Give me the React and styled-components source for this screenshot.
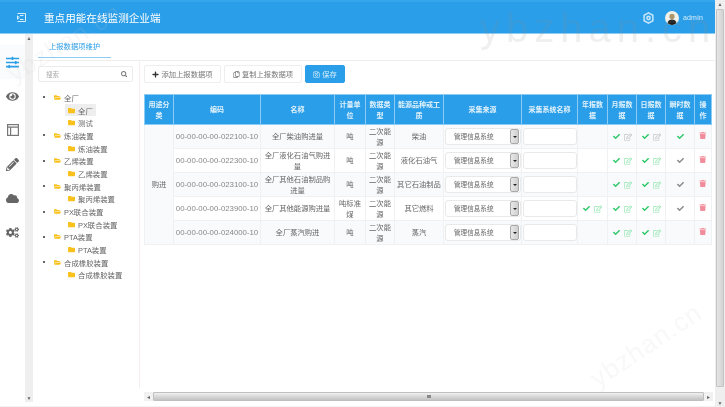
import React from 'react';
import styled, { createGlobalStyle } from 'styled-components';
import {
  FaSlidersH, FaEye, FaPencilAlt, FaCloud, FaCogs, FaCheck, FaRegEdit, FaTrash,
  FaSearch, FaPlus, FaFolder, FaFolderOpen, FaRegSave, FaRegCopy,
} from 'react-icons/fa';

const GlobalStyle = createGlobalStyle`
  html, body { margin: 0; padding: 0; background: #fff; }
  * { box-sizing: border-box; }
  body { font-family: "Liberation Sans", "Noto Sans CJK SC", sans-serif; color: #666; }
`;

const Shell = styled.div`
  position: relative;
  width: 725px;
  height: 407px;
  display: flex;
  overflow: hidden;
  background: #fff;
  filter: blur(0.35px);
`;

const Page = styled.div`
  flex: 1;
  min-width: 0;
  display: flex;
  flex-direction: column;
`;

const Header = styled.header`
  height: 34px;
  flex: none;
  display: flex;
  align-items: center;
  background: #2a9ee8;
  border-top: 2px solid #35a5ec;
  border-bottom: 1px solid #8ccbf3;
  padding: 0 12px 0 17px;
  color: #fff;
`;

const Title = styled.h1`
  margin: 0 0 0 18px;
  font-size: 10.6px;
  font-weight: 400;
  flex: 1;
`;

const Avatar = styled.svg`
  width: 14px;
  height: 14px;
  margin-left: 11px;
`;

const UserName = styled.span`
  margin-left: 4px;
  font-size: 7px;
  color: #d5edfb;
  letter-spacing: 0.2px;
`;

const Body = styled.div`
  flex: 1;
  min-height: 0;
  display: flex;
  padding-bottom: 4px;
  border-bottom: 1px solid #f2f2f2;
`;

const Rail = styled.nav`
  width: 25px;
  flex: none;
  display: flex;
  flex-direction: column;
  align-items: center;
`;

const RailItem = styled.div`
  width: 100%;
  height: 34px;
  display: flex;
  align-items: center;
  justify-content: center;
  font-size: 13px;
  color: ${(p) => (p.$active ? '#2a9ee8' : '#666')};
  background: ${(p) => (p.$active ? '#f9fbfd' : 'transparent')};
`;

const FirstRailGap = styled.div`
  height: 11px;
`;

const VScroll = styled.div`
  width: ${(p) => p.$width}px;
  flex: none;
  display: flex;
  flex-direction: column;
  align-items: stretch;
  background: #efefef;
  font-size: 5px;
  color: #777;
  text-align: center;
`;

const Arrow = styled.div`
  flex: none;
  height: 8px;
  line-height: 8px;
  font-size: 5px;
  color: #666;
  text-align: center;
`;

const VThumb = styled.div`
  flex: 1;
  margin: 1px 1px 12px;
  background: linear-gradient(90deg, #e6e6e6, #d2d2d2);
  border: 1px solid #c4c4c4;
  border-radius: 1px;
`;

const VSpacer = styled.div`
  flex: 1;
`;

const Main = styled.main`
  flex: 1;
  min-width: 0;
  display: flex;
  flex-direction: column;
`;

const TabBar = styled.div`
  height: 27px;
  flex: none;
  padding: 0 0 0 5px;
  border-bottom: 1px solid #eeeeee;
  display: flex;
  align-items: flex-end;
`;

const Tab = styled.div`
  width: 73px;
  height: 21px;
  padding-left: 11px;
  line-height: 20px;
  font-size: 7.3px;
  color: #2a9ee8;
  border-bottom: 1px solid #8ccbf3;
  margin-bottom: 2px;
`;

const Content = styled.div`
  flex: 1;
  min-height: 0;
  display: flex;
`;

const TreePanel = styled.aside`
  width: 107px;
  flex: none;
  padding: 5px 6px 0 5px;
  border-right: 1px solid #f5eeee;
  margin-bottom: 14px;
`;

const SearchBox = styled.div`
  height: 16px;
  display: flex;
  align-items: center;
  justify-content: space-between;
  padding: 0 5px 0 7px;
  border: 1px solid #ececec;
  border-radius: 2px;
  font-size: 6.5px;
  color: #aaa;
  & svg { font-size: 6.5px; color: #777; }
`;

const TreeList = styled.ul`
  list-style: none;
  margin: 9px 0 0;
  padding: 0;
`;

const TreeRow = styled.li`
  height: 12.7px;
  display: flex;
  align-items: center;
  font-size: 7.4px;
  color: #666;
  padding-left: ${(p) => (p.$child ? '27px' : '5px')};
`;

const Bullet = styled.span`
  width: 2px;
  height: 2px;
  margin-right: 6px;
  background: #333;
  border-radius: 50%;
`;

const NodeLabel = styled.span`
  display: flex;
  align-items: center;
  gap: 3px;
  height: 12px;
  padding: 0 3px;
  background: ${(p) => (p.$selected ? '#eeeeee' : 'transparent')};
  & svg { font-size: 7px; color: #f8c11c; }
`;

const RightPane = styled.section`
  flex: 1;
  min-width: 0;
  display: flex;
  flex-direction: column;
  padding: 4px 0 0 4px;
`;

const Toolbar = styled.div`
  height: 18px;
  flex: none;
  display: flex;
  gap: 3px;
  margin-bottom: 11px;
`;

const ToolButton = styled.button`
  height: 18px;
  width: ${(p) => p.$width}px;
  padding: 0;
  display: flex;
  align-items: center;
  justify-content: center;
  gap: 2px;
  font-family: inherit;
  font-size: 7.3px;
  border-radius: 2px;
  border: 1px solid ${(p) => (p.$primary ? '#2a9ee8' : '#eeeeee')};
  background: ${(p) => (p.$primary ? '#2a9ee8' : '#fff')};
  color: ${(p) => (p.$primary ? '#d8effc' : '#777')};
  & svg { font-size: 7px; }
`;

const TableWrap = styled.div`
  flex: 1;
  min-height: 0;
`;

const Table = styled.table`
  width: 567px;
  table-layout: fixed;
  border-collapse: collapse;
  font-size: 7.3px;
  text-align: center;
  line-height: 11px;
`;

const Th = styled.th`
  height: 30px;
  padding: 0 2px;
  font-weight: 700;
  font-size: 7px;
  color: #e3f3fd;
  background: #2a9ee8;
  border: 1px solid #8ccbf3;
`;

const Td = styled.td`
  height: 24px;
  padding: 0 ${(p) => (p.$code ? '1px' : '2px')};
  border: 1px solid #eef2f5;
  color: ${(p) => (p.$dim ? '#888' : '#666')};
  font-size: ${(p) => (p.$code ? '7.8px' : '7.3px')};
  white-space: ${(p) => (p.$code ? 'nowrap' : 'normal')};
  overflow: hidden;
  background: ${(p) => (p.$shaded ? '#f8fafb' : 'transparent')};
`;

const ControlTd = styled(Td)`
  padding: 0 1px;
`;

const Tr = styled.tr`
  background: ${(p) => (p.$odd ? '#f8fafb' : '#fff')};
`;

const SelectBox = styled.div`
  width: 76px;
  height: 17px;
  margin: 0 auto;
  display: flex;
  align-items: center;
  justify-content: space-between;
  padding: 0 1px 0 8px;
  background: #fff;
  border: 1px solid #e9e9e9;
  border-radius: 3px;
  font-size: 6.6px;
  color: #666;
`;

const SelectArrow = styled.span`
  width: 9px;
  height: 15px;
  display: flex;
  align-items: center;
  justify-content: center;
  background: linear-gradient(90deg, #e8e8e8, #cfcfcf);
  border: 1px solid #aaa;
  border-radius: 2px;
  &::after {
    content: '';
    border-left: 2px solid transparent;
    border-right: 2px solid transparent;
    border-top: 2.5px solid #222;
  }
`;

const TextInput = styled.input`
  display: block;
  width: 54px;
  height: 17px;
  margin: 0 auto;
  border: 1px solid #e9e9e9;
  border-radius: 3px;
  background: #fff;
`;

const Flags = styled.span`
  display: flex;
  align-items: center;
  justify-content: center;
  gap: 4px;
  font-size: 7px;
`;

const Check = styled(FaCheck)`
  color: ${(p) => (p.$off ? '#888' : '#2bc866')};
`;

const Edit = styled(FaRegEdit)`
  color: ${(p) => (p.$off ? '#c4c4c4' : '#95e6b4')};
  font-size: 8px;
`;

const Trash = styled(FaTrash)`
  color: #f28d9b;
  font-size: 7.5px;
`;

const HScroll = styled.div`
  height: 9px;
  flex: none;
  margin: 0 2px 1px 0;
  display: flex;
  align-items: center;
  background: #f1f1f1;
`;

const HArrow = styled.div`
  width: 9px;
  flex: none;
  font-size: 5px;
  color: #666;
  text-align: center;
`;

const HThumb = styled.div`
  flex: 1;
  height: 9px;
  display: flex;
  align-items: center;
  justify-content: center;
  background: linear-gradient(180deg, #f0f0f0, #d6d6d6 55%, #c2c2c2);
  border: 1px solid #c0c0c0;
  border-radius: 1px;
  &::after {
    content: '';
    width: 4px;
    height: 3px;
    background: #888;
  }
`;

const Watermark = styled.div`
  position: absolute;
  left: ${(p) => p.$x}px;
  top: ${(p) => p.$y}px;
  font-family: "Liberation Sans", sans-serif;
  font-size: ${(p) => p.$size}px;
  letter-spacing: ${(p) => p.$spacing}px;
  transform: rotate(${(p) => p.$angle}deg);
  transform-origin: left bottom;
  color: ${(p) => p.$color};
  white-space: nowrap;
  pointer-events: none;
`;

const columns = [
  ['用途分类', 29], ['编码', 87], ['名称', 74], ['计量单位', 31], ['数据类型', 29],
  ['能源品种或工质', 49], ['采集来源', 78], ['采集系统名称', 56], ['年报数据', 30],
  ['月报数据', 29], ['日报数据', 29], ['瞬时数据', 29], ['操作', 17],
];

const rows = [
  { code: '00-00-00-00-022100-10', name: '全厂柴油购进量', unit: '吨', kind: '柴油', instant: 'on', offEdit: true },
  { code: '00-00-00-00-022300-10', name: '全厂液化石油气购进量', unit: '吨', kind: '液化石油气', instant: 'off' },
  { code: '00-00-00-00-023100-10', name: '全厂其他石油制品购进量', unit: '吨', kind: '其它石油制品', instant: 'off' },
  { code: '00-00-00-00-023900-10', name: '全厂其他能源购进量', unit: '吨标准煤', kind: '其它燃料', instant: 'off', yearly: true },
  { code: '00-00-00-00-024000-10', name: '全厂蒸汽购进', unit: '吨', kind: '蒸汽' },
];

const tree = ['全厂', '炼油装置', '乙烯装置', '聚丙烯装置', 'PX联合装置', 'PTA装置', '合成橡胶装置'];

function Flag({ off }) {
  return (
    <Flags>
      <Check />
      <Edit $off={off} />
    </Flags>
  );
}

function TreeNode({ name, index }) {
  return (
    <>
      <TreeRow>
        <Bullet />
        <NodeLabel><FaFolderOpen />{name}</NodeLabel>
      </TreeRow>
      <TreeRow $child>
        <NodeLabel $selected={index === 0}><FaFolder />{name}</NodeLabel>
      </TreeRow>
      {index === 0 && (
        <TreeRow $child>
          <NodeLabel><FaFolder />测试</NodeLabel>
        </TreeRow>
      )}
    </>
  );
}

export default function App() {
  return (
    <Shell>
      <GlobalStyle />
      <Page>
        <Header>
          <svg width="9" height="9" viewBox="0 0 9 9" fill="none" stroke="#d8effc" strokeWidth="1">
            <path d="M0.5 0.5H8.5V8.5H0.5M3 2.5H6.5M3 6.5H6.5M0.5 2.8L2.3 4.5L0.5 6.2Z" />
          </svg>
          <Title>重点用能在线监测企业端</Title>
          <svg width="11" height="12" viewBox="0 0 10 11" fill="none" stroke="#c5e6fb" strokeWidth="1.4">
            <path d="M5 0.8L9 3V8L5 10.2L1 8V3Z" />
            <circle cx="5" cy="5.5" r="1.5" />
          </svg>
          <Avatar viewBox="0 0 14 14">
            <circle cx="7" cy="7" r="7" fill="#f4f1ea" />
            <circle cx="7" cy="5.4" r="2.6" fill="#a9966b" />
            <path d="M2.6 12.2C3 9.4 5 8.6 7 8.6S11 9.4 11.4 12.2A7 7 0 0 1 2.6 12.2Z" fill="#1d1d1d" />
          </Avatar>
          <UserName>admin</UserName>
        </Header>
        <Body>
          <Rail>
            <FirstRailGap />
            <RailItem $active><FaSlidersH /></RailItem>
            <RailItem><FaEye /></RailItem>
            <RailItem>
              <svg width="12" height="12" viewBox="0 0 12 12" fill="none" stroke="#777" strokeWidth="1.2">
                <rect x="0.6" y="0.6" width="10.8" height="10.8" />
                <path d="M0.6 3.2H11.4M3.6 3.2V11.4" />
              </svg>
            </RailItem>
            <RailItem><FaPencilAlt /></RailItem>
            <RailItem><FaCloud /></RailItem>
            <RailItem><FaCogs /></RailItem>
          </Rail>
          <VScroll $width={8}>
            <Arrow>▲</Arrow>
            <VSpacer />
            <Arrow>▼</Arrow>
          </VScroll>
          <Main>
            <TabBar>
              <Tab>上报数据项维护</Tab>
            </TabBar>
            <Content>
              <TreePanel>
                <SearchBox>搜索<FaSearch /></SearchBox>
                <TreeList>
                  {tree.map((name, index) => (
                    <TreeNode key={name} name={name} index={index} />
                  ))}
                </TreeList>
              </TreePanel>
              <RightPane>
                <Toolbar>
                  <ToolButton $width={77}><FaPlus color="#333" />添加上报数据项</ToolButton>
                  <ToolButton $width={78}><FaRegCopy />复制上报数据项</ToolButton>
                  <ToolButton $width={40} $primary><FaRegSave />保存</ToolButton>
                </Toolbar>
                <TableWrap>
                  <Table>
                    <colgroup>
                      {columns.map(([title, width]) => (
                        <col key={title} width={width} />
                      ))}
                    </colgroup>
                    <thead>
                      <tr>
                        {columns.map(([title]) => (
                          <Th key={title}>{title}</Th>
                        ))}
                      </tr>
                    </thead>
                    <tbody>
                      {rows.map((row, i) => (
                        <Tr key={row.code} $odd={i % 2 === 0}>
                          {i === 0 && <Td rowSpan={5} $shaded>购进</Td>}
                          <Td $code $dim>{row.code}</Td>
                          <Td>{row.name}</Td>
                          <Td>{row.unit}</Td>
                          <Td>二次能源</Td>
                          <Td>{row.kind}</Td>
                          <ControlTd><SelectBox>管理信息系统<SelectArrow /></SelectBox></ControlTd>
                          <ControlTd><TextInput /></ControlTd>
                          <Td>{row.yearly && <Flag />}</Td>
                          <Td><Flag off={row.offEdit} /></Td>
                          <Td><Flag off={row.offEdit} /></Td>
                          <Td>
                            {row.instant && (
                              <Flags><Check $off={row.instant === 'off'} /></Flags>
                            )}
                          </Td>
                          <ControlTd><Trash /></ControlTd>
                        </Tr>
                      ))}
                    </tbody>
                  </Table>
                </TableWrap>
                <HScroll>
                  <HArrow>◄</HArrow>
                  <HThumb />
                  <HArrow>►</HArrow>
                </HScroll>
              </RightPane>
            </Content>
          </Main>
        </Body>
      </Page>
      <VScroll $width={10}>
        <Arrow>▲</Arrow>
        <VThumb />
        <Arrow>▼</Arrow>
      </VScroll>
      <Watermark $x={480} $y={6} $size={40} $spacing={6} $angle={0} $color="rgba(140,140,140,0.14)">ybzhan.cn</Watermark>
      <Watermark $x={18} $y={58} $size={26} $spacing={1} $angle={-31} $color="rgba(200,200,200,0.13)">ybzhan.cn</Watermark>
      <Watermark $x={602} $y={363} $size={26} $spacing={1} $angle={-34} $color="rgba(200,200,200,0.12)">ybzhan.cn</Watermark>
    </Shell>
  );
}
